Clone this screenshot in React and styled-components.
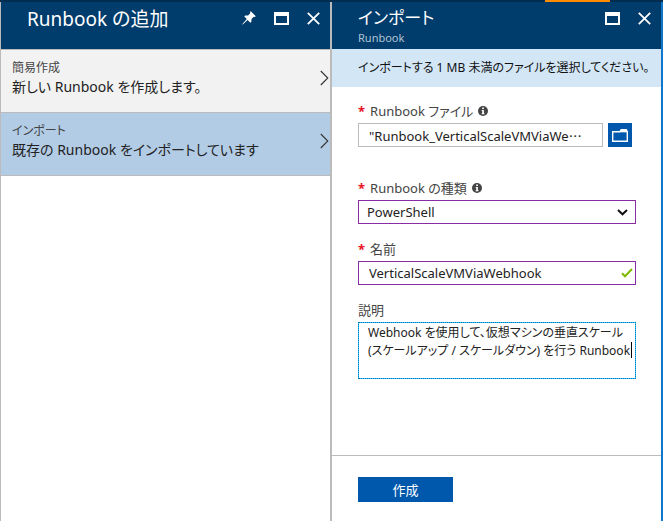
import React, { useState } from "react";
import styled, { createGlobalStyle, css } from "styled-components";

const GlobalStyle = createGlobalStyle`
  *, *::before, *::after { box-sizing: border-box; }
  body {
    margin: 0;
    background: #ffffff;
    color: #222222;
    font-family: "Noto Sans", "Noto Sans CJK JP", sans-serif;
    font-size: 13px;
    font-feature-settings: "palt";
  }
  button, input, select, textarea {
    font: inherit;
    font-feature-settings: inherit;
    color: inherit;
  }
`;

const Page = styled.div`
  display: flex;
  flex-direction: column;
  min-height: 100vh;
`;

const TopBar = styled.div`
  display: flex;
  justify-content: flex-end;
  height: 2px;
  padding-right: 53px;
  background: #012d50;
`;

const Progress = styled.div`
  width: 65px;
  background: #ff8c00;
`;

const Blades = styled.div`
  flex: 1;
  display: grid;
  grid-template-columns: minmax(0, 332fr) minmax(0, 331fr);
`;

const Blade = styled.section`
  display: flex;
  flex-direction: column;
  min-width: 0;
  ${(p) =>
    p.$active
      ? css`
          border-right: 2px solid #1177cc;
        `
      : css`
          border-left: 1px solid #bbbbbb;
          border-right: 2px solid #bbbbbb;
        `}
`;

const BladeHeader = styled.header`
  display: flex;
  justify-content: space-between;
  height: 47px;
  padding: 4px 9px 0 26px;
  background: #003c6c;
  color: #ffffff;
`;

const Title = styled.h1`
  margin: 0;
  font-size: ${(p) => (p.$compact ? "17px" : "19px")};
  font-weight: 400;
  line-height: ${(p) => (p.$compact ? "24px" : "26px")};
`;

const Subtitle = styled.p`
  margin: 0;
  font-size: 11px;
  line-height: 15px;
  color: #b2c4d3;
`;

const Actions = styled.div`
  display: flex;
  gap: 16px;
  height: 24px;
  align-items: center;
`;

const IconButton = styled.button`
  display: flex;
  justify-content: center;
  width: 16px;
  padding: 0;
  border: 0;
  background: none;
  color: #ffffff;
`;

const OptionList = styled.nav`
  display: flex;
  flex-direction: column;
  border-top: 1px solid #bbbbbb;
`;

const Option = styled.a`
  display: flex;
  align-items: center;
  justify-content: space-between;
  height: 63px;
  padding: 0 1px 6px 11px;
  border-bottom: 1px solid #bbbbbb;
  background: ${(p) => (p.$selected ? "#b3cce6" : "#f2f2f2")};
  color: #222222;
  text-decoration: none;
`;

const OptionText = styled.span`
  display: flex;
  flex-direction: column;
`;

const OptionName = styled.span`
  font-size: 12px;
  line-height: 18px;
  color: #444444;
`;

const OptionDetail = styled.span`
  font-size: 14px;
  line-height: 20px;
`;

const Notice = styled.p`
  margin: 0;
  padding: 0 0 0 26px;
  font-size: 12px;
  line-height: 38px;
  height: 38px;
  white-space: nowrap;
  background: #d2e6f6;
  color: #111111;
`;

const Form = styled.form`
  flex: 1;
  display: flex;
  flex-direction: column;
`;

const Fields = styled.div`
  flex: 1;
  display: flex;
  flex-direction: column;
  gap: 15px;
  padding: 14px 25px 14px 26px;
`;

const Field = styled.div`
  display: flex;
  flex-direction: column;
  gap: 2px;
  padding-bottom: ${(p) => (p.$spaced ? "16px" : "0")};
`;

const LabelRow = styled.div`
  display: flex;
  align-items: center;
  gap: 5px;
  line-height: 20px;
  color: #444444;
`;

const Required = styled.span`
  color: #e81123;
  font-weight: 700;
`;

const ControlRow = styled.div`
  position: relative;
  display: flex;
  gap: 5px;
  padding-right: ${(p) => (p.$inset ? "4px" : "0")};
`;

const control = css`
  flex: 1;
  min-width: 0;
  width: 100%;
  height: 24px;
  margin: 0;
  border: 1px solid ${(p) => (p.$changed ? "#8a2da5" : "#bbbbbb")};
  border-radius: 0;
  outline: 0;
  background: #ffffff;
`;

const TextInput = styled.input`
  ${control}
  padding: 0 10px;
`;

const Select = styled.select`
  ${control}
  padding: 0 24px 0 8px;
  appearance: none;
`;

const TextArea = styled.textarea`
  display: block;
  width: 100%;
  height: 57px;
  margin: 0;
  padding: 1px 2px 1px 9px;
  border: 1px dotted #0078b4;
  outline: 0;
  background: linear-gradient(#ffffff, #ffffff) padding-box, #22c3fa border-box;
  resize: none;
  overflow: hidden;
  font-size: 12px;
  line-height: 18px;
`;

const Adornment = styled.span`
  position: absolute;
  top: 0;
  bottom: 0;
  right: ${(p) => (p.$wide ? "8px" : "3px")};
  display: flex;
  align-items: center;
  pointer-events: none;
`;

const Caret = styled.span`
  position: absolute;
  top: 20px;
  right: 4px;
  width: 1px;
  height: 16px;
  background: #000000;
`;

const BrowseButton = styled.button`
  display: flex;
  align-items: center;
  justify-content: center;
  width: 24px;
  height: 24px;
  padding: 0;
  border: 0;
  background: #0058ad;
`;

const Footer = styled.footer`
  padding: 21px 26px 19px;
  border-top: 1px solid #bbbbbb;
`;

const CreateButton = styled.button`
  display: block;
  width: 95px;
  height: 25px;
  padding: 0;
  border: 0;
  background: #0058ad;
  color: #ffffff;
`;

const PinIcon = () => (
  <svg width="14" height="14" viewBox="0 0 14 14" fill="#fff">
    <path d="M8.8 0.2 13.8 5.2 12.7 6 11.8 5.7 9.5 8 9.4 10.8 8.3 11.7 5.6 9 0.8 13.6 0.2 13.2 4.8 8.1 2.3 5.5 3.2 4.6 6.1 4.6 8.3 2.3 8 1.1Z" />
  </svg>
);

const MaximizeIcon = () => (
  <svg width="15" height="13" viewBox="0 0 15 13" fill="none" stroke="#fff">
    <path d="M1 2V12H14V2" strokeWidth="2" />
    <path d="M0 2H15" strokeWidth="4" />
  </svg>
);

const CloseIcon = () => (
  <svg width="13" height="13" viewBox="0 0 13 13" fill="none" stroke="#fff" strokeWidth="1.8">
    <path d="M0.8 0.8 12.2 12.2M12.2 0.8 0.8 12.2" />
  </svg>
);

const ArrowIcon = () => (
  <svg width="9" height="16" viewBox="0 0 9 16" fill="none" stroke="#333" strokeWidth="1.1">
    <path d="M0.8 1 7.8 8 0.8 15" />
  </svg>
);

const InfoIcon = () => (
  <svg width="10" height="10" viewBox="0 0 10 10">
    <circle cx="5" cy="5" r="5" fill="#444" />
    <path d="M4.2 1.6H5.9V3H4.2ZM3.7 4H5.9V7.3H6.5V8.3H3.6V7.3H4.2V5H3.7Z" fill="#fff" />
  </svg>
);

const FolderIcon = () => (
  <svg width="16" height="13" viewBox="0 0 16 13" fill="none" stroke="#fff">
    <path d="M0.7 12.3V2.7H8L9.2 0.7H14.2L15.3 2.7V12.3Z" strokeWidth="1.4" />
    <path d="M9.2 1H14.2L15 3H8.3Z" fill="#fff" strokeWidth="0.6" />
  </svg>
);

const ChevronIcon = () => (
  <svg width="11" height="7" viewBox="0 0 11 7" fill="none" stroke="#111" strokeWidth="2">
    <path d="M1 1 5.5 5.3 10 1" />
  </svg>
);

const CheckIcon = () => (
  <svg width="12" height="10" viewBox="0 0 12 10" fill="none" stroke="#7fba00" strokeWidth="2">
    <path d="M1 5.2 4 8.3 11 1" />
  </svg>
);

function FieldLabel({ htmlFor, required, info, children }) {
  return (
    <LabelRow>
      {required && <Required>*</Required>}
      <label htmlFor={htmlFor}>{children}</label>
      {info && <InfoIcon />}
    </LabelRow>
  );
}

function WindowActions({ pin }) {
  return (
    <Actions>
      {pin && <IconButton aria-label="ピン留め"><PinIcon /></IconButton>}
      <IconButton aria-label="最大化"><MaximizeIcon /></IconButton>
      <IconButton aria-label="閉じる"><CloseIcon /></IconButton>
    </Actions>
  );
}

const options = [
  { name: "簡易作成", detail: "新しい Runbook を作成します。" },
  { name: "インポート", detail: "既存の Runbook をインポートしています", selected: true },
];

export default function App() {
  const [name, setName] = useState("VerticalScaleVMViaWebhook");
  const [description, setDescription] = useState(
    "Webhook を使用して、仮想マシンの垂直スケール\n(スケールアップ / スケールダウン) を行う Runbook"
  );

  return (
    <Page lang="ja">
      <GlobalStyle />
      <TopBar><Progress /></TopBar>
      <Blades>
        <Blade>
          <BladeHeader>
            <Title>Runbook の追加</Title>
            <WindowActions pin />
          </BladeHeader>
          <OptionList>
            {options.map((o) => (
              <Option key={o.name} href="#" $selected={o.selected}>
                <OptionText>
                  <OptionName>{o.name}</OptionName>
                  <OptionDetail>{o.detail}</OptionDetail>
                </OptionText>
                <ArrowIcon />
              </Option>
            ))}
          </OptionList>
        </Blade>
        <Blade $active>
          <BladeHeader>
            <div>
              <Title $compact>インポート</Title>
              <Subtitle>Runbook</Subtitle>
            </div>
            <WindowActions />
          </BladeHeader>
          <Notice>インポートする 1 MB 未満のファイルを選択してください。</Notice>
          <Form onSubmit={(e) => e.preventDefault()}>
            <Fields>
              <Field $spaced>
                <FieldLabel htmlFor="file" required info>Runbook ファイル</FieldLabel>
                <ControlRow $inset>
                  <TextInput id="file" readOnly value={'"Runbook_VerticalScaleVMViaWe⋯'} />
                  <BrowseButton type="button" aria-label="参照"><FolderIcon /></BrowseButton>
                </ControlRow>
              </Field>
              <Field>
                <FieldLabel htmlFor="type" required info>Runbook の種類</FieldLabel>
                <ControlRow>
                  <Select id="type" $changed defaultValue="PowerShell">
                    <option>PowerShell</option>
                  </Select>
                  <Adornment $wide><ChevronIcon /></Adornment>
                </ControlRow>
              </Field>
              <Field>
                <FieldLabel htmlFor="name" required>名前</FieldLabel>
                <ControlRow>
                  <TextInput id="name" $changed value={name} onChange={(e) => setName(e.target.value)} />
                  <Adornment><CheckIcon /></Adornment>
                </ControlRow>
              </Field>
              <Field>
                <FieldLabel htmlFor="description">説明</FieldLabel>
                <ControlRow>
                  <TextArea id="description" value={description} onChange={(e) => setDescription(e.target.value)} />
                  <Caret />
                </ControlRow>
              </Field>
            </Fields>
            <Footer><CreateButton>作成</CreateButton></Footer>
          </Form>
        </Blade>
      </Blades>
    </Page>
  );
}
